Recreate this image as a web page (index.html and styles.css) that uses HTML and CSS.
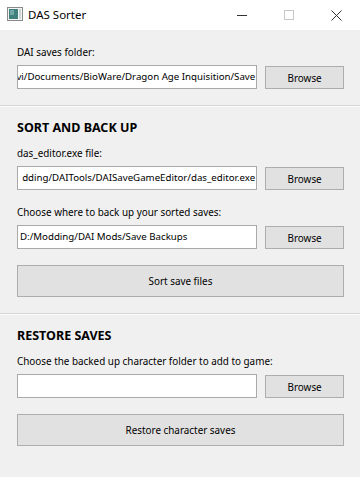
FILE: index.html
```html
<!DOCTYPE html>
<html lang="en">
<head>
    <meta charset="UTF-8">
    <meta name="viewport" content="width=device-width, initial-scale=1.0">
    <title>DAS Sorter</title>
    <link rel="stylesheet" href="styles.css">
</head>
<body>
    <div class="window">
        <div class="titlebar">
            <svg class="app-icon" width="16" height="14" viewBox="0 0 16 14">
                <rect x="0.5" y="0.5" width="15" height="13" fill="#f4f4f4" stroke="#8a8a8a"/>
                <rect x="2" y="2" width="9" height="10" fill="#3f7f7c"/>
                <rect x="3" y="3" width="4" height="5" fill="#6fa8a4"/>
                <rect x="12" y="2" width="2" height="10" fill="#c9d6d6"/>
            </svg>
            <span class="title">DAS Sorter</span>
            <div class="controls">
                <span class="ctl">
                    <svg width="11" height="11" viewBox="0 0 11 11"><path d="M0 5.5H10" stroke="#333" stroke-width="1"/></svg>
                </span>
                <span class="ctl">
                    <svg width="11" height="11" viewBox="0 0 11 11"><rect x="0.5" y="0.5" width="9" height="9" fill="none" stroke="#c8c8c8"/></svg>
                </span>
                <span class="ctl">
                    <svg width="11" height="11" viewBox="0 0 11 11"><path d="M0.5 0.5L10.5 10.5M10.5 0.5L0.5 10.5" stroke="#333" stroke-width="1"/></svg>
                </span>
            </div>
        </div>

        <div class="section first">
            <div class="label">DAI saves folder:</div>
            <div class="row">
                <div class="field scrolled"><span>vi/Documents/BioWare/Dragon Age Inquisition/Save</span></div>
                <button class="browse">Browse</button>
            </div>
        </div>
        <div class="separator"></div>

        <div class="section">
            <div class="heading">SORT AND BACK UP</div>
            <div class="label">das_editor.exe file:</div>
            <div class="row">
                <div class="field scrolled"><span>dding/DAITools/DAISaveGameEditor/das_editor.exe</span></div>
                <button class="browse">Browse</button>
            </div>
            <div class="label spaced">Choose where to back up your sorted saves:</div>
            <div class="row">
                <div class="field"><span>D:/Modding/DAI Mods/Save Backups</span></div>
                <button class="browse">Browse</button>
            </div>
            <button class="wide">Sort save files</button>
        </div>
        <div class="separator"></div>

        <div class="section">
            <div class="heading">RESTORE SAVES</div>
            <div class="label">Choose the backed up character folder to add to game:</div>
            <div class="row">
                <div class="field"><span></span></div>
                <button class="browse">Browse</button>
            </div>
            <button class="wide">Restore character saves</button>
        </div>
    </div>
</body>
</html>
```
FILE: styles.css
```css
body {
    margin: 0;
    background-color: #f0f0f0;
    font-family: "Noto Sans", "Open Sans", sans-serif;
    font-size: 9.9px;
    color: #000;
}

.window {
    width: 360px;
    height: 477px;
    overflow: hidden;
}

.titlebar {
    height: 30px;
    background-color: #fff;
    display: flex;
    align-items: center;
}

.app-icon {
    margin-left: 7px;
    margin-right: 5px;
    margin-top: -3px;
}

.title {
    font-size: 11.5px;
    margin-top: -2px;
}

.controls {
    margin-left: auto;
    display: flex;
    height: 30px;
}

.ctl {
    width: 47px;
    display: flex;
    align-items: center;
    justify-content: center;
}

.section {
    padding: 13px 16px 16px 17px;
}

.section.first {
    padding-top: 15px;
}

.separator {
    border-top: 1px solid #d6d6d6;
    border-bottom: 1px solid #fbfbfb;
}

.heading {
    font-size: 12.5px;
    font-weight: bold;
    line-height: 16px;
    margin-bottom: 10px;
}

.label {
    line-height: 14px;
    margin-bottom: 6px;
}

.label.spaced {
    margin-top: 15px;
}

.row {
    display: flex;
    align-items: flex-end;
    gap: 8px;
}

.field {
    width: 241px;
    height: 24px;
    box-sizing: border-box;
    border: 1px solid #a9a9a9;
    background-color: #fff;
    font-size: 9.7px;
    line-height: 22px;
    padding: 0 2px;
    overflow: hidden;
    white-space: nowrap;
    display: flex;
}

.field.scrolled {
    justify-content: flex-end;
    padding: 0 1px;
}

button {
    font-family: inherit;
    font-size: 9.9px;
    color: #000;
    background-color: #e1e1e1;
    border: 1px solid #adadad;
    padding: 0;
    box-sizing: border-box;
}

.browse {
    width: 79px;
    height: 23px;
}

.wide {
    display: block;
    width: 327px;
    height: 32px;
    margin-top: 16px;
}
```
